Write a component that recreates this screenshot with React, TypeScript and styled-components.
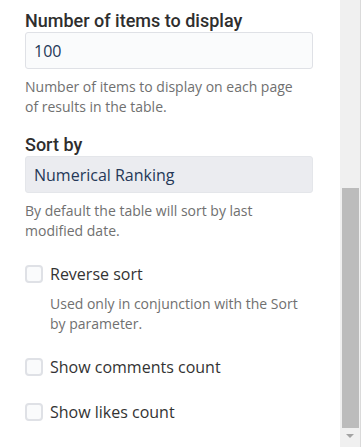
import styled, { createGlobalStyle } from "styled-components";

const GlobalStyle = createGlobalStyle`
  html, body {
    margin: 0;
    padding: 0;
    background: #ffffff;
  }
  body {
    font-family: "Open Sans", "Noto Sans", sans-serif;
    -webkit-font-smoothing: antialiased;
  }`;

const Frame = styled.div`
  display: flex;
  width: 361px;
  height: 447px;
  overflow: hidden;`;

const Content = styled.div`
  flex: 1;
  padding: 10px 0 0 25px;`;

const Field = styled.div`
  width: 288px;
  margin-bottom: 17px;`;

const Label = styled.div`
  font-family: Roboto, "Open Sans", sans-serif;
  font-size: 18px;
  line-height: 22px;
  font-weight: 500;
  color: #2e2e2e;`;

const TextBox = styled.div<{ $filled?: boolean }>`
  box-sizing: border-box;
  height: 37px;
  padding: 0 8px;
  display: flex;
  align-items: center;
  border: 1px solid ${(p) => (p.$filled ? "#e4e6ea" : "#dfe1e6")};
  border-radius: 3px;
  background: ${(p) => (p.$filled ? "#ebecf0" : "#fafbfc")};
  color: #253858;
  font-size: 16px;`;

const Help = styled.div<{ $indent?: boolean }>`
  max-width: ${(p) => (p.$indent ? "263px" : "282px")};
  margin-top: 8px;
  margin-left: ${(p) => (p.$indent ? "25px" : "0")};
  font-size: 14px;
  line-height: 20px;
  color: #707070;`;

const CheckGroup = styled.div`
  margin-top: 21px;`;

const CheckRow = styled.label`
  display: flex;
  align-items: center;
  gap: 7px;
  height: 24px;
  font-size: 16px;
  color: #333333;`;

const Box = styled.span`
  box-sizing: border-box;
  width: 18px;
  height: 18px;
  border: 2px solid #dfe1e6;
  border-radius: 4px;
  background: #fafbfc;`;

const Scrollbar = styled.div`
  width: 21px;
  box-sizing: border-box;
  background: #f0f0f0;
  border-right: 1px solid #dadada;
  display: flex;
  flex-direction: column;
  align-items: center;
  padding-top: 188px;`;

const Thumb = styled.div`
  width: 17px;
  height: 240px;
  background: #bcbcbc;`;

const Arrow = styled.div`
  margin-top: 6px;
  width: 0;
  height: 0;
  border-left: 4px solid transparent;
  border-right: 4px solid transparent;
  border-top: 4px solid #a3a3a3;`;

function Checkbox({ label }: { label: string }) {
  return (
    <CheckRow>
      <Box />
      {label}
    </CheckRow>
  );
}

export default function App() {
  return (
    <>
      <GlobalStyle />
      <Frame>
        <Content>
          <Field>
            <Label>Number of items to display</Label>
            <TextBox>100</TextBox>
            <Help>Number of items to display on each page of results in the table.</Help>
          </Field>
          <Field>
            <Label>Sort by</Label>
            <TextBox $filled>Numerical Ranking</TextBox>
            <Help>By default the table will sort by last modified date.</Help>
          </Field>
          <CheckGroup>
            <Checkbox label="Reverse sort" />
            <Help $indent>Used only in conjunction with the Sort by parameter.</Help>
          </CheckGroup>
          <CheckGroup>
            <Checkbox label="Show comments count" />
          </CheckGroup>
          <CheckGroup>
            <Checkbox label="Show likes count" />
          </CheckGroup>
        </Content>
        <Scrollbar>
          <Thumb />
          <Arrow />
        </Scrollbar>
      </Frame>
    </>
  );
}
